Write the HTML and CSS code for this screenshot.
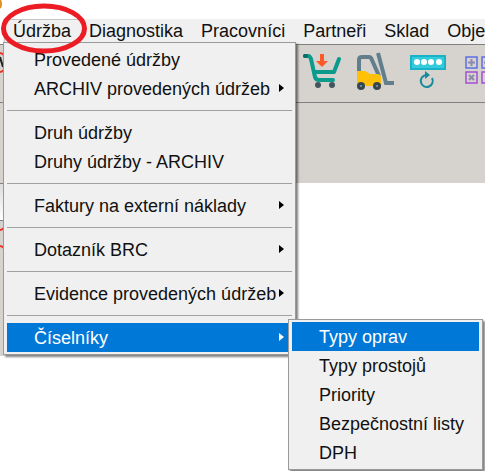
FILE: index.html
```html
<!DOCTYPE html>
<html lang="cs">
<head>
    <meta charset="UTF-8">
    <meta name="viewport" content="width=device-width, initial-scale=1.0">
    <title>Údržba</title>
    <link rel="stylesheet" href="styles.css">
</head>
<body>
    <nav class="menubar">
        <button class="menubar-item active">Údržba</button>
        <button class="menubar-item">Diagnostika</button>
        <button class="menubar-item">Pracovníci</button>
        <button class="menubar-item">Partneři</button>
        <button class="menubar-item">Sklad</button>
        <button class="menubar-item">Obje</button>
    </nav>

    <main class="workspace">
        <div class="toolbar">
            <svg class="tool" width="40" height="38" viewBox="0 0 40 38">
                <path d="M4 4h3q2 0 3 3l4 18q1 3 4 3h14M13 20h20l5-13" fill="none" stroke="#0b9a8b" stroke-width="4" stroke-linecap="round" stroke-linejoin="round"/>
                <path d="M4 4h1" stroke="#086d63" stroke-width="4" stroke-linecap="round"/>
                <path d="M19 2h4v7h4l-6 6-6-6h4z" fill="#ff5a26"/>
                <circle cx="17" cy="33" r="3" fill="#43565f"/>
                <circle cx="31" cy="33" r="3" fill="#43565f"/>
            </svg>
            <svg class="tool" width="40" height="38" viewBox="0 0 40 38">
                <path d="M4 20V8q0-3 3-3h7q2 0 3 3l7 16" fill="none" stroke="#627e8b" stroke-width="4"/>
                <path d="M23 1l8 30h8" fill="none" stroke="#627e8b" stroke-width="4"/>
                <path d="M2 19h8l5 3h7q4 0 4 4v8H2z" fill="#ffc107"/>
                <circle cx="6" cy="34" r="4" fill="#37474f"/>
                <circle cx="22" cy="34" r="4" fill="#37474f"/>
                <circle cx="6" cy="34" r="1" fill="#8aa0aa"/>
                <circle cx="22" cy="34" r="1" fill="#8aa0aa"/>
            </svg>
            <svg class="tool" width="40" height="38" viewBox="0 0 40 38">
                <rect x="2" y="4" width="34" height="13" fill="#35cbdc" stroke="#18b3c6" stroke-width="2"/>
                <g fill="#fff">
                    <circle cx="8" cy="10" r="3"/>
                    <circle cx="15" cy="10" r="3"/>
                    <circle cx="22" cy="10" r="3"/>
                    <circle cx="30" cy="10" r="3"/>
                </g>
                <path d="M23 26a6 6 0 1 1-6-3" fill="none" stroke="#168b9b" stroke-width="2"/>
                <path d="M16 19l5 4-5 4z" fill="#168b9b"/>
            </svg>
            <svg class="tool" width="40" height="38" viewBox="0 0 40 38">
                <g fill="none" stroke-width="1.5">
                    <path stroke="#5c6ee6" d="M3 5h11v11H3zM19 5h11v11H19z"/>
                    <path stroke="#a44fd6" d="M3 20h11v11H3zM19 20h11v11H19z"/>
                </g>
                <path d="M8.5 7v7M5 10.500h7M21 10.500h7M6 23l5 5M11 23l-5 5" stroke="#8b8bab" stroke-width="2"/>
            </svg>
        </div>
    </main>

    <!-- Edge of the side panel behind the menu -->
    <aside class="side">
        <div class="side-field"></div>
        <div class="side-panel"></div>
    </aside>

    <svg class="overlay" width="4" height="270" viewBox="0 0 4 270">
        <path d="M0 0q2 4 0 8" fill="none" stroke="#e09020" stroke-width="2"/>
        <path d="M0 53q2 0 4 2M0 72q2 0 4-2M0 230q2 0 4-2M0 246q2 0 4 2" fill="none" stroke="#e8382c" stroke-width="2"/>
        <path d="M0 57l3 10" fill="none" stroke="#222" stroke-width="2"/>
    </svg>

    <div class="menu main-menu">
        <button class="menu-item">Provedené údržby</button>
        <button class="menu-item has-submenu">ARCHIV provedených údržeb</button>
        <hr>
        <button class="menu-item">Druh údržby</button>
        <button class="menu-item">Druhy údržby - ARCHIV</button>
        <hr>
        <button class="menu-item has-submenu">Faktury na externí náklady</button>
        <hr>
        <button class="menu-item has-submenu">Dotazník BRC</button>
        <hr>
        <button class="menu-item has-submenu">Evidence provedených údržeb</button>
        <hr>
        <button class="menu-item has-submenu selected">Číselníky</button>
    </div>

    <div class="menu submenu">
        <button class="menu-item selected">Typy oprav</button>
        <button class="menu-item">Typy prostojů</button>
        <button class="menu-item">Priority</button>
        <button class="menu-item">Bezpečnostní listy</button>
        <button class="menu-item">DPH</button>
    </div>

    <!-- Red ring round the open menu -->
    <svg class="overlay" width="90" height="58" viewBox="0 0 90 58">
        <ellipse cx="44" cy="28.5" rx="40.5" ry="22.5" fill="none" stroke="#ec1c24" stroke-width="5"/>
    </svg>
</body>
</html>
```

FILE: styles.css
```css
* {
    box-sizing: border-box;
}
body {
    position: relative;
    min-height: 100vh;
    margin: 0;
    padding-top: 19px;
    background: #fff;
    color: #111;
    font-family: "Liberation Sans", Arial, sans-serif;
    font-size: 18px;
    overflow: hidden;
}
button {
    border: none;
    background: none;
    color: inherit;
    font: inherit;
    text-align: left;
    white-space: nowrap;
}
.menubar {
    display: flex;
    height: 25px;
    margin-left: 3px;
    padding-left: 1px;
    background: #f0f0f0;
    overflow: hidden;
}
.menubar-item {
    flex: none;
    padding: 0 9px;
}
.active {
    box-shadow: inset 1px 1px #c4c4c4;
}
.workspace {
    height: 139px;
    background: #d6d3ce;
    border-top: 1px solid #808080;
}
.toolbar {
    display: flex;
    gap: 14px;
    height: 58px;
    padding: 7px 0 0 301px;
    border-bottom: 1px solid #808080;
    overflow: hidden;
}
.tool {
    flex: none;
}
.side {
    width: 4px;
    background: #d6d3ce;
}
.side-field {
    height: 38px;
    background: linear-gradient(#dcdcdc, #fff);
    border-top: 1px solid #808080;
    border-bottom: 1px solid #808080;
}
.side-panel {
    height: 135px;
}

/* Drop-down menus */
.menu {
    position: absolute;
    padding: 2px 3px;
    background: #f0f0f0;
    border: 1px solid #9a9a9a;
    box-shadow: 2px 2px 2px rgba(0, 0, 0, 0.5);
}
.main-menu {
    top: 42px;
    left: 3px;
    width: 293px;
}
.submenu {
    top: 319px;
    left: 288px;
    width: 195px;
}
.menu-item {
    display: block;
    position: relative;
    width: 100%;
    height: 29px;
    padding: 2px 0 0 27px;
}
.has-submenu::after {
    content: "";
    position: absolute;
    top: 10px;
    right: 8px;
    border: 4px solid transparent;
    border-left: 5px solid #000;
    border-right: none;
}
.has-submenu.selected::after {
    border-left-color: #fff;
}
.selected {
    background: #0078d7;
    color: #fff;
}
.menu hr {
    height: 1px;
    margin: 7px 0;
    border: none;
    background: #a0a0a0;
}

.overlay {
    position: absolute;
    top: 0;
    left: 0;
}
```
